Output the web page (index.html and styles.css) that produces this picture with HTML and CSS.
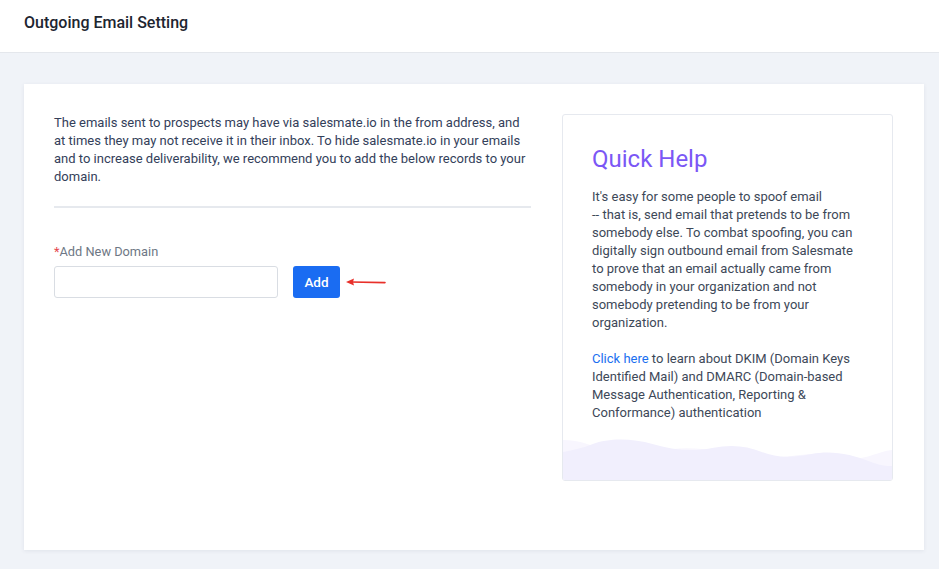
FILE: index.html
```html
<!DOCTYPE html>
<html>
<head>
<meta charset="utf-8">
<link rel="stylesheet" href="styles.css">
</head>
<body>
<header class="topbar">
  <h1 class="title">Outgoing Email Setting</h1>
</header>
<main class="page">
  <section class="card">
    <div class="left">
      <p class="intro">The emails sent to prospects may have via salesmate.io in the from address, and at times they may not receive it in their inbox. To hide salesmate.io in your emails and to increase deliverability, we recommend you to add the below records to your domain.</p>
      <hr class="divider">
      <label class="label"><span class="req">*</span>Add New Domain</label>
      <div class="row">
        <input class="input" type="text">
        <button class="btn">Add</button>
        <svg class="arrow" width="42" height="10" viewBox="0 0 42 10">
          <line x1="6" y1="5" x2="40" y2="5.6" stroke="#e8302a" stroke-width="1.6" stroke-linecap="round"/>
          <path d="M1 5 L9 1.6 L8 5 L9 8.4 Z" fill="#e8302a"/>
        </svg>
      </div>
    </div>
    <aside class="help">
      <h2 class="help-title">Quick Help</h2>
      <p class="help-text">It's easy for some people to spoof email<br>-- that is, send email that pretends to be from somebody else. To combat spoofing, you can digitally sign outbound email from Salesmate to prove that an email actually came from somebody in your organization and not somebody pretending to be from your organization.</p>
      <p class="help-text"><a class="link" href="#">Click here</a> to learn about DKIM (Domain Keys Identified Mail) and DMARC (Domain-based Message Authentication, Reporting &amp; Conformance) authentication</p>
      <svg class="wave" viewBox="0 0 331 42" preserveAspectRatio="none">
        <path d="M0 2 C15 2 25 6 35 10 C55 18 80 18 95 14 C115 8 140 10 160 14 C185 20 200 22 230 18 C255 14 270 18 290 20 C305 22 315 14 331 12 L331 42 L0 42 Z" fill="#f8f6fe"/>
        <path d="M0 14 C10 12 20 10 30 6 C45 0 70 0 90 6 C110 12 130 14 150 10 C170 6 185 8 200 14 C215 20 230 20 250 16 C270 12 290 16 310 24 C320 28 326 28 331 28 L331 42 L0 42 Z" fill="#f1effd"/>
      </svg>
    </aside>
  </section>
</main>
</body>
</html>
```
FILE: styles.css
```css
* { box-sizing: border-box; }
html, body { margin: 0; padding: 0; }
body {
  font-family: Roboto, "Noto Sans", sans-serif;
  background: #f0f3f8;
  color: #37404f;
  width: 939px;
  height: 569px;
  overflow: hidden;
}
.topbar {
  height: 53px;
  background: #ffffff;
  border-bottom: 1px solid #e4e7ec;
  padding: 13px 24px 0;
}
.title {
  margin: 0;
  font-size: 16px;
  font-weight: 500;
  line-height: 20px;
  color: #1d2530;
}
.page {
  padding: 31px 15px 19px 24px;
}
.card {
  background: #ffffff;
  height: 466px;
  padding: 30px 31px 30px 30px;
  display: flex;
  gap: 31px;
  align-items: flex-start;
  box-shadow: 0 1px 4px rgba(40, 55, 80, 0.08);
}
.left {
  width: 477px;
  flex: none;
}
.intro {
  margin: 0;
  font-size: 13px;
  line-height: 18px;
  color: #33405a;
}
.divider {
  margin: 20px 0 0;
  border: 0;
  border-top: 2px solid #e6e9ee;
  height: 0;
}
.label {
  display: block;
  margin-top: 35px;
  font-size: 12.8px;
  line-height: 18px;
  color: #6e7785;
}
.req { color: #e5484d; }
.row {
  margin-top: 5px;
  display: flex;
  align-items: center;
}
.input {
  width: 224px;
  height: 32px;
  border: 1px solid #d9dde3;
  border-radius: 3px;
  background: #fff;
  margin: 0;
}
.btn {
  margin-left: 15px;
  width: 47px;
  height: 32px;
  border: 0;
  border-radius: 3px;
  background: #1a6cf2;
  color: #ffffff;
  font-family: Roboto, sans-serif;
  font-size: 13.5px;
  font-weight: 500;
  padding: 0;
}
.arrow {
  margin-left: 5px;
  display: block;
}
.help {
  width: 331px;
  height: 367px;
  flex: none;
  position: relative;
  border: 1px solid #e6e9ef;
  border-radius: 3px;
  padding: 30px 30px 0 29px;
  overflow: hidden;
}
.help-title {
  margin: 0;
  font-size: 24px;
  font-weight: 400;
  line-height: 28px;
  color: #7b57f5;
}
.help-text {
  margin: 15px 0 0;
  font-size: 13px;
  line-height: 18px;
  color: #3d4858;
}
.help-text + .help-text { margin-top: 18px; }
.link {
  color: #1b6ff0;
  text-decoration: none;
}
.wave {
  position: absolute;
  left: 0;
  bottom: 0;
  width: 100%;
  height: 42px;
  display: block;
}
```
